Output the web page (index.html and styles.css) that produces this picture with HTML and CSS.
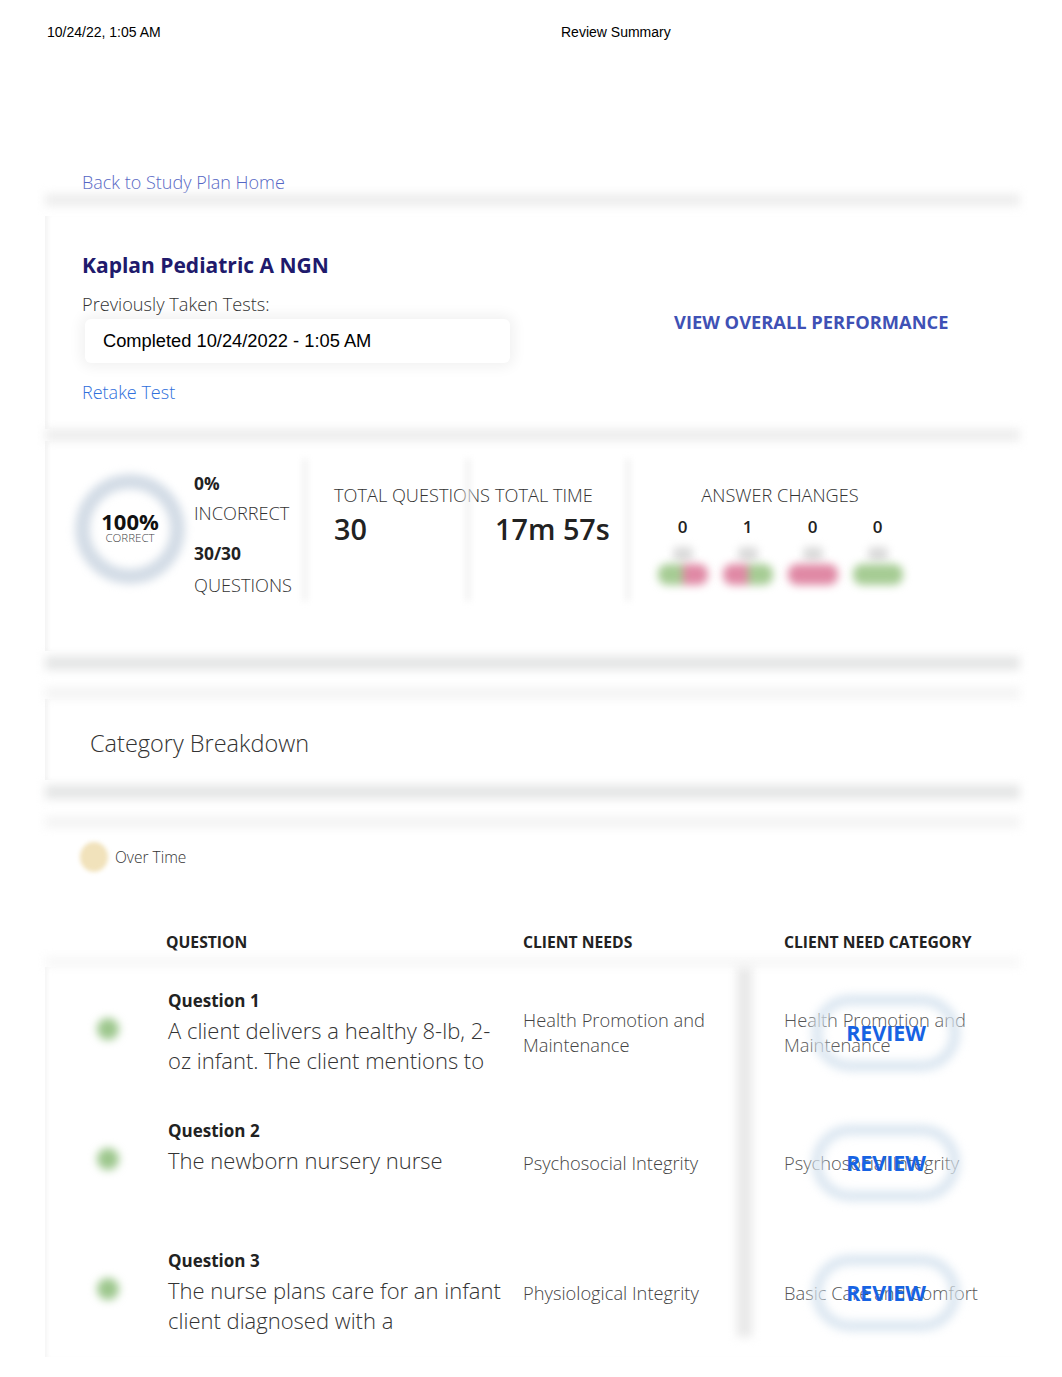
FILE: index.html
```html
<!DOCTYPE html>
<html lang="en">
<head>
    <meta charset="UTF-8">
    <meta name="viewport" content="width=device-width, initial-scale=1.0">
    <title>Review Summary</title>
    <link rel="stylesheet" href="styles.css">
</head>
<body>
    <div class="print-head">
        <span class="print-date">10/24/22, 1:05 AM</span>
        <span class="print-title">Review Summary</span>
    </div>

    <div class="page">
        <a class="back-link" href="#">Back to Study Plan Home</a>
        <div class="band"></div>

        <!-- test header -->
        <div class="card test-card">
            <div class="test-info">
                <h1>Kaplan Pediatric A NGN</h1>
                <p class="prev-label">Previously Taken Tests:</p>
                <div class="test-select">Completed 10/24/2022 - 1:05 AM</div>
                <a class="retake" href="#">Retake Test</a>
            </div>
            <a class="overall" href="#">VIEW OVERALL PERFORMANCE</a>
        </div>
        <div class="band"></div>

        <!-- score summary -->
        <div class="card stats">
            <div class="donut">
                <div class="donut-ring"></div>
                <div class="donut-label"><strong>100%</strong><span>CORRECT</span></div>
            </div>
            <div class="score">
                <div class="score-num">0%</div>
                <div class="score-label">INCORRECT</div>
                <div class="score-num second">30/30</div>
                <div class="score-label last">QUESTIONS</div>
            </div>
            <div class="sep"></div>
            <div class="stat stat-q">
                <div class="stat-label">TOTAL QUESTIONS</div>
                <div class="stat-value">30</div>
            </div>
            <div class="sep"></div>
            <div class="stat stat-t">
                <div class="stat-label">TOTAL TIME</div>
                <div class="stat-value">17m 57s</div>
            </div>
            <div class="sep"></div>
            <div class="changes">
                <div class="stat-label">ANSWER CHANGES</div>
                <div class="change-row">
                    <div class="change"><b>0</b><i class="tick"></i><span class="pill"><em class="g"></em><em class="p"></em></span></div>
                    <div class="change"><b>1</b><i class="tick"></i><span class="pill"><em class="p"></em><em class="g"></em></span></div>
                    <div class="change"><b>0</b><i class="tick"></i><span class="pill"><em class="p"></em><em class="p"></em></span></div>
                    <div class="change"><b>0</b><i class="tick"></i><span class="pill"><em class="g"></em><em class="g"></em></span></div>
                </div>
            </div>
        </div>

        <div class="band dark"></div>
        <div class="band light"></div>

        <div class="card cat-head">
            <h2>Category Breakdown</h2>
        </div>

        <div class="band dark"></div>
        <div class="band light"></div>

        <div class="legend">
            <span class="legend-dot"></span>
            <span>Over Time</span>
        </div>

        <!-- question table -->
        <div class="q-table">
            <div class="q-row q-header">
                <div></div>
                <div>QUESTION</div>
                <div>CLIENT NEEDS</div>
                <div>CLIENT NEED CATEGORY</div>
            </div>
            <div class="band faint"></div>

            <div class="q-rows">
                <div class="q-row">
                    <div class="q-status"><span class="dot"></span></div>
                    <div class="q-cell">
                        <div class="q-title">Question 1</div>
                        <div class="q-text">A client delivers a healthy 8-lb, 2-oz infant. The client mentions to</div>
                    </div>
                    <div class="need">Health Promotion and Maintenance</div>
                    <div class="need category">Health Promotion and Maintenance
                        <a class="review" href="#"><span class="review-ring"></span><span class="review-text">REVIEW</span></a>
                    </div>
                </div>
                <div class="q-row">
                    <div class="q-status"><span class="dot"></span></div>
                    <div class="q-cell">
                        <div class="q-title">Question 2</div>
                        <div class="q-text">The newborn nursery nurse</div>
                    </div>
                    <div class="need">Psychosocial Integrity</div>
                    <div class="need category">Psychosocial Integrity
                        <a class="review" href="#"><span class="review-ring"></span><span class="review-text">REVIEW</span></a>
                    </div>
                </div>
                <div class="q-row">
                    <div class="q-status"><span class="dot"></span></div>
                    <div class="q-cell">
                        <div class="q-title">Question 3</div>
                        <div class="q-text">The nurse plans care for an infant client diagnosed with a</div>
                    </div>
                    <div class="need">Physiological Integrity</div>
                    <div class="need category">Basic Care and Comfort
                        <a class="review" href="#"><span class="review-ring"></span><span class="review-text">REVIEW</span></a>
                    </div>
                </div>
            </div>
        </div>
    </div>
</body>
</html>
```

FILE: styles.css
```css
body {
    margin: 0;
    background: #fff;
    color: #333;
    font-family: "Open Sans", "Liberation Sans", sans-serif;
    font-weight: 300;
}
a { text-decoration: none; }
h1, h2, p { margin: 0; }

.print-head {
    display: flex;
    padding: 24px 0 0 47px;
    font: 14px/16px "Liberation Sans", Arial, sans-serif;
    color: #000;
}
.print-date { width: 514px; }

.page {
    margin-left: 45px;
    width: 975px;
}

.back-link {
    display: block;
    margin: 130px 0 0 37px;
    font-size: 18px;
    line-height: 24px;
    color: #5566c4;
}

.band {
    height: 12px;
    background: #ededed;
    filter: blur(5px);
}
.band.dark { height: 14px; background: #e5e6e6; margin-top: 5px; }
.band.light { height: 12px; background: #f4f4f4; margin-top: 17px; }
.band.faint { height: 10px; background: #f7f7f7; margin: 5px 0 0; }

.card {
    box-shadow: inset 5px 0 4px -2px #f4f4f4;
}

/* test header */
.test-card {
    display: flex;
    height: 213px;
    box-sizing: border-box;
    padding: 35px 0 0 37px;
    margin-top: 10px;
}
.test-info { width: 592px; }
.test-card h1 {
    font-size: 21px;
    line-height: 28px;
    font-weight: 700;
    color: #201a6c;
}
.prev-label {
    margin-top: 13px;
    font-size: 18.2px;
    line-height: 24px;
    color: #333;
}
.test-select {
    margin: 3px 0 0 3px;
    width: 425px;
    height: 44px;
    box-sizing: border-box;
    padding-left: 18px;
    border-radius: 6px;
    box-shadow: 0 0 14px 4px rgba(0, 0, 0, 0.06);
    font: 18.3px/44px "Liberation Sans", Arial, sans-serif;
    color: #000;
}
.retake {
    display: block;
    margin-top: 17px;
    font-size: 18px;
    line-height: 24px;
    color: #2f6fdc;
}
.overall {
    margin-top: 61px;
    align-self: flex-start;
    font-size: 18.3px;
    line-height: 20px;
    font-weight: 700;
    color: #3f51b5;
}

/* score summary */
.stats {
    display: flex;
    align-items: flex-start;
    height: 210px;
    padding-left: 30px;
}
.donut {
    display: grid;
    width: 110px;
    height: 110px;
    margin-top: 33px;
}
.donut-ring, .donut-label { grid-area: 1 / 1; }
.donut-ring {
    border-radius: 50%;
    border: 15px solid #d3dce6;
    filter: blur(4px);
}
.donut-label {
    display: flex;
    flex-direction: column;
    align-items: center;
    justify-content: center;
    color: #111;
}
.donut-label strong {
    font-size: 22px;
    line-height: 22px;
    font-weight: 700;
    margin-top: -4px;
}
.donut-label span {
    font-size: 11.5px;
    line-height: 12px;
    color: #444;
}
.score {
    width: 108px;
    margin: 32px 0 0 9px;
}
.score-num {
    font-size: 17.4px;
    line-height: 20px;
    font-weight: 700;
    color: #222;
}
.score-num.second { margin-top: 20px; }
.score-label {
    margin-top: 10px;
    font-size: 18.2px;
    line-height: 20px;
    color: #333;
}
.score-label.last { margin-top: 12px; }
.sep {
    width: 6px;
    height: 142px;
    margin-top: 18px;
    background: #f3f3f3;
    filter: blur(3px);
}
.stat { margin-top: 44px; }
.stat-q { width: 131px; margin-left: 26px; }
.stat-t { width: 130px; margin-left: 24px; }
.stat-label {
    font-size: 18.2px;
    line-height: 20px;
    color: #333;
    white-space: nowrap;
}
.stat-value {
    margin-top: 7px;
    font-size: 28.8px;
    line-height: 34px;
    font-weight: 600;
    color: #222;
}
.changes {
    width: 260px;
    margin: 44px 0 0 19px;
    text-align: center;
}
.change-row { display: flex; }
.change {
    width: 65px;
    display: flex;
    flex-direction: column;
    align-items: center;
}
.change b {
    margin-top: 12px;
    font-size: 17px;
    line-height: 20px;
    font-weight: 600;
    color: #222;
}
.tick {
    width: 20px;
    height: 14px;
    margin-top: 10px;
    background: #dadada;
    border-radius: 5px;
    filter: blur(4px);
}
.pill {
    display: flex;
    width: 50px;
    height: 21px;
    margin-top: 3px;
    border-radius: 9px;
    overflow: hidden;
    filter: blur(4px);
}
.pill em { flex: 1; }
.pill .g { background: #a6cc94; }
.pill .p { background: #e089a5; }

/* category breakdown */
.cat-head { padding: 30px 0 23px 45px; }
.cat-head h2 {
    font-size: 23.5px;
    line-height: 28px;
    font-weight: 300;
    color: #333;
}

.legend {
    display: flex;
    align-items: center;
    margin-top: 14px;
    padding-left: 35px;
    font-size: 15.5px;
    line-height: 28px;
    color: #333;
}
.legend-dot {
    width: 28px;
    height: 30px;
    margin-right: 7px;
    border-radius: 50%;
    background: #f1e2bb;
    filter: blur(2px);
}

/* question table */
.q-table { margin-top: 60px; }
.q-row {
    display: grid;
    grid-template-columns: 121px 357px 261px 1fr;
    align-items: center;
}
.q-header {
    font-size: 15.7px;
    line-height: 20px;
    font-weight: 700;
    color: #222;
}
.q-rows {
    position: relative;
    box-shadow: inset 4px 0 4px -2px #f4f4f4;
}
.q-rows::after {
    content: "";
    position: absolute;
    left: 692px;
    top: 0;
    bottom: 20px;
    width: 15px;
    background: #e8e8e8;
    filter: blur(5px);
}
.q-rows .q-row { height: 130px; }
.q-status {
    display: flex;
    justify-content: center;
    padding-left: 4px;
    padding-bottom: 6px;
}
.dot {
    width: 22px;
    height: 22px;
    border-radius: 50%;
    background: #9dc78d;
    filter: blur(4px);
}
.q-title {
    font-size: 17px;
    line-height: 24px;
    font-weight: 700;
    color: #222;
    padding-left: 2px;
}
.q-text {
    width: 340px;
    height: 60px;
    margin-top: 2px;
    padding-left: 2px;
    font-size: 22px;
    line-height: 30px;
    color: #333;
}
.need {
    width: 200px;
    font-size: 18.3px;
    line-height: 25px;
    color: #444;
}
.category {
    position: relative;
    width: 210px;
    color: #555;
}
.review {
    position: absolute;
    left: 28px;
    top: 50%;
    width: 148px;
    height: 76px;
    margin-top: -37px;
    display: grid;
}
.review-ring, .review-text { grid-area: 1 / 1; }
.review-ring {
    border: 10px solid #d9e5f0;
    border-radius: 40px;
    filter: blur(5px);
}
.review-text {
    align-self: center;
    justify-self: center;
    font-size: 21.4px;
    line-height: 24px;
    font-weight: 700;
    color: #1763e3;
}
```
